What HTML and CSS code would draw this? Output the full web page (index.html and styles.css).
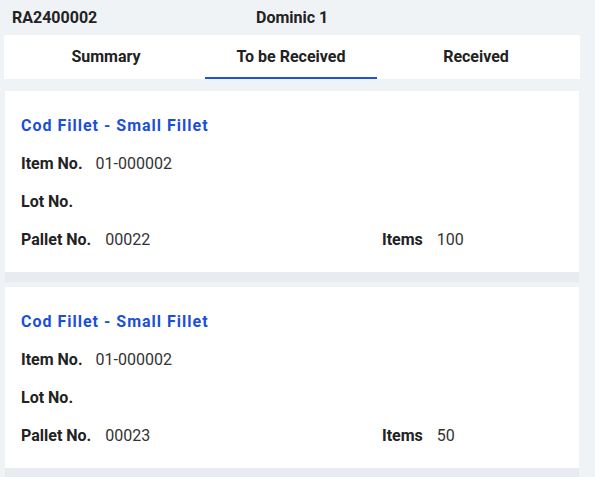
FILE: index.html
```html
<!DOCTYPE html>
<html lang="en">
<head>
  <meta charset="UTF-8" />
  <meta name="viewport" content="width=device-width, initial-scale=1" />
  <title>Receiving - RA2400002</title>
  <link rel="stylesheet" href="styles.css">
</head>
<body>
  <div class="top">
    <span class="doc-no">RA2400002</span>
    <span class="doc-name">Dominic 1</span>
  </div>

  <div class="tabs">
    <div class="tab">Summary</div>
    <div class="tab active">To be Received</div>
    <div class="tab">Received</div>
  </div>

  <div class="list">
    <div class="card">
      <div class="card-title">Cod Fillet - Small Fillet</div>
      <div class="row"><span class="label">Item No.</span><span class="value">01-000002</span></div>
      <div class="row"><span class="label">Lot No.</span></div>
      <div class="row split">
        <div><span class="label">Pallet No.</span><span class="value">00022</span></div>
        <div><span class="label">Items</span><span class="value">100</span></div>
      </div>
    </div>

    <div class="card">
      <div class="card-title">Cod Fillet - Small Fillet</div>
      <div class="row"><span class="label">Item No.</span><span class="value">01-000002</span></div>
      <div class="row"><span class="label">Lot No.</span></div>
      <div class="row split">
        <div><span class="label">Pallet No.</span><span class="value">00023</span></div>
        <div><span class="label">Items</span><span class="value">50</span></div>
      </div>
    </div>
  </div>
</body>
</html>
```

FILE: styles.css
```css
body {
  margin: 0;
  font-family: Roboto, "Liberation Sans", sans-serif;
  background-color: #f0f3f6;
  color: #222;
  font-size: 16px;
}
.top {
  display: flex;
  align-items: center;
  height: 35px;
  padding-left: 12px;
  font-weight: bold;
}
.doc-no {
  width: 244px;
}
.tabs {
  display: flex;
  gap: 13px;
  margin: 0 15px 0 4px;
  padding: 0 18px 0 16px;
  height: 44px;
  background: white;
}
.tab {
  flex: 1;
  text-align: center;
  padding-top: 2px;
  line-height: 40px;
  font-weight: bold;
  border-bottom: 2px solid transparent;
}
.tab.active {
  border-bottom-color: #1d55d6;
}
.list {
  padding: 12px 16px 0 5px;
}
.card {
  background: white;
  padding: 25px 16px 22px;
  margin-bottom: 15px;
  box-shadow: 0 10px 0 #e8ecf0;
}
.card-title {
  color: #1b4fd8;
  font-weight: bold;
  letter-spacing: 1px;
  line-height: 20px;
}
.row {
  margin-top: 18px;
  line-height: 20px;
}
.split {
  display: flex;
}
.split > div:first-child {
  width: 361px;
}
.label {
  font-weight: bold;
  margin-right: 13px;
}
.split .label {
  margin-right: 14px;
}
.value {
  color: #333;
}
```
